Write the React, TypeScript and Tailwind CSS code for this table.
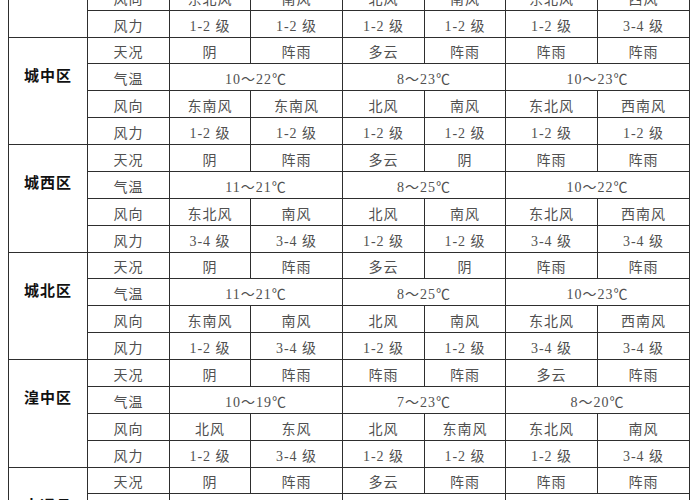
type District = {
  name: string;
  sky: string[];
  temp: string[];
  dir: string[];
  force: string[];
};

const districts: District[] = [
  {
    name: "城东区",
    sky: ["阴", "阵雨", "多云", "阵雨", "阵雨", "阵雨"],
    temp: ["10～22℃", "8～24℃", "10～23℃"],
    dir: ["东北风", "南风", "北风", "南风", "东北风", "西风"],
    force: ["1-2 级", "1-2 级", "1-2 级", "1-2 级", "1-2 级", "3-4 级"],
  },
  {
    name: "城中区",
    sky: ["阴", "阵雨", "多云", "阵雨", "阵雨", "阵雨"],
    temp: ["10～22℃", "8～23℃", "10～23℃"],
    dir: ["东南风", "东南风", "北风", "南风", "东北风", "西南风"],
    force: ["1-2 级", "1-2 级", "1-2 级", "1-2 级", "1-2 级", "1-2 级"],
  },
  {
    name: "城西区",
    sky: ["阴", "阵雨", "多云", "阴", "阵雨", "阵雨"],
    temp: ["11～21℃", "8～25℃", "10～22℃"],
    dir: ["东北风", "南风", "北风", "南风", "东北风", "西南风"],
    force: ["3-4 级", "3-4 级", "1-2 级", "1-2 级", "3-4 级", "3-4 级"],
  },
  {
    name: "城北区",
    sky: ["阴", "阵雨", "多云", "阴", "阵雨", "阵雨"],
    temp: ["11～21℃", "8～25℃", "10～23℃"],
    dir: ["东南风", "南风", "北风", "南风", "东北风", "西南风"],
    force: ["1-2 级", "3-4 级", "1-2 级", "1-2 级", "3-4 级", "3-4 级"],
  },
  {
    name: "湟中区",
    sky: ["阴", "阵雨", "阵雨", "阵雨", "多云", "阵雨"],
    temp: ["10～19℃", "7～23℃", "8～20℃"],
    dir: ["北风", "东风", "北风", "东南风", "东北风", "南风"],
    force: ["1-2 级", "3-4 级", "1-2 级", "1-2 级", "1-2 级", "3-4 级"],
  },
  {
    name: "大通县",
    sky: ["阴", "阵雨", "多云", "阵雨", "阵雨", "阵雨"],
    temp: ["9～20℃", "7～23℃", "8～21℃"],
    dir: ["东南风", "南风", "北风", "南风", "东北风", "西南风"],
    force: ["1-2 级", "3-4 级", "1-2 级", "1-2 级", "1-2 级", "3-4 级"],
  },
];

// text sits a little under the middle of each row, like the source document
const cell =
  "flex items-center justify-center border-r border-b border-[#2e2e2e] pt-[6px] text-[14px] leading-none tracking-[1px] text-[#505050]";

function Group({ d }: { d: District }) {
  return (
    <div className="grid grid-cols-[79px_82px_81px_92px_82px_81px_92px_92px] grid-rows-[repeat(4,26.89px)]">
      <div className="row-span-4 flex justify-center border-r border-b border-[#2e2e2e] pt-[29px]">
        <span className="text-[15px] leading-[18px] font-bold tracking-[1px] text-[#111]">
          {d.name}
        </span>
      </div>

      <div className={cell}>天况</div>
      {d.sky.map((v, i) => (
        <div key={"s" + i} className={cell}>
          {v}
        </div>
      ))}

      <div className={cell}>气温</div>
      {d.temp.map((v, i) => (
        <div key={"t" + i} className={cell + " col-span-2"}>
          {v}
        </div>
      ))}

      <div className={cell}>风向</div>
      {d.dir.map((v, i) => (
        <div key={"d" + i} className={cell}>
          {v}
        </div>
      ))}

      <div className={cell}>风力</div>
      {d.force.map((v, i) => (
        <div key={"f" + i} className={cell}>
          {v}
        </div>
      ))}
    </div>
  );
}

export default function App() {
  return (
    <div className="h-[500px] w-[700px] overflow-hidden bg-white font-['Liberation_Serif','Noto_Sans_CJK_SC',serif]">
      <div className="mt-[-70px] ml-2 w-fit border-l border-[#2e2e2e]">
        {districts.map((d) => (
          <Group key={d.name} d={d} />
        ))}
      </div>
    </div>
  );
}
